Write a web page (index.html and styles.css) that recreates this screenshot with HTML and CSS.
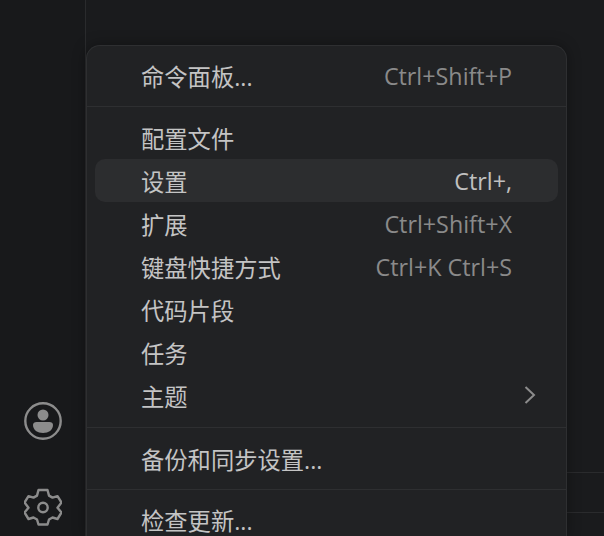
FILE: index.html
```html
<!DOCTYPE html>
<html lang="zh-CN">
<head>
  <meta charset="UTF-8">
  <title>Manage menu</title>
  <link rel="stylesheet" href="styles.css">
</head>
<body>
  <div class="workbench">
    <div class="activity-bar">
      <svg class="activity-icon" viewBox="0 0 38 38" width="38" height="38">
        <circle cx="19" cy="19" r="17.700" fill="none" stroke="#8c8c8c" stroke-width="2.400"/>
        <circle cx="19" cy="13" r="5.500" fill="#8c8c8c"/>
        <path d="M9 23c0-2 1.500-3 3.500-3h13c2 0 3.500 1 3.500 3 0 5-4.500 8-10 8s-10-3-10-8z" fill="#8c8c8c"/>
      </svg>
      <svg class="activity-icon" viewBox="0 0 38 38" width="38" height="38" fill="none" stroke="#8c8c8c" stroke-width="2.400" stroke-linejoin="round">
        <path d="M14.500 2h9l1.500 5.600 3.500 2 5-1.500 4 6.400-4 5.300 4 4.700-4 6.500-5-1.500-3.500 2-1.500 5h-9l-1.500-5-3.500-2-5 1.500-4-6.500 4-4.700-4-5.300 4-6.400 5 1.500 3.500-2z"/>
        <circle cx="19" cy="19.500" r="4.700"/>
      </svg>
    </div>
    <div class="editor-area">
      <div class="panel-line first"></div>
      <div class="panel-line"></div>
    </div>
  </div>

  <div class="menu">
    <div class="menu-item"><span>命令面板...</span><span class="keys">Ctrl+Shift+P</span></div>
    <div class="separator"></div>
    <div class="menu-item"><span>配置文件</span></div>
    <div class="menu-item active"><span>设置</span><span class="keys">Ctrl+,</span></div>
    <div class="menu-item"><span>扩展</span><span class="keys">Ctrl+Shift+X</span></div>
    <div class="menu-item"><span>键盘快捷方式</span><span class="keys">Ctrl+K Ctrl+S</span></div>
    <div class="menu-item"><span>代码片段</span></div>
    <div class="menu-item"><span>任务</span></div>
    <div class="menu-item">
      <span>主题</span>
      <svg class="chevron" viewBox="0 0 12 20" width="12" height="20" fill="none" stroke="#8c8c8c" stroke-width="2">
        <path d="M1.500 2l8.500 8-8.500 8"/>
      </svg>
    </div>
    <div class="separator wide"></div>
    <div class="menu-item"><span>备份和同步设置...</span></div>
    <div class="separator"></div>
    <div class="menu-item last"><span>检查更新...</span></div>
  </div>
</body>
</html>
```

FILE: styles.css
```css
html, body {
  margin: 0;
  height: 100%;
  overflow: hidden;
  background: #1a1b1d;
}
.workbench {
  display: flex;
  height: 536px;
}
.activity-bar {
  width: 86px;
  box-sizing: border-box;
  border-right: 1px solid #2a2b2d;
  background: #18191b;
  display: flex;
  flex-direction: column;
  align-items: center;
  padding-top: 402px;
  gap: 48px;
}
.activity-icon {
  flex: none;
}
.editor-area {
  flex: 1;
  padding-top: 472px;
}
.panel-line {
  height: 1px;
  background: #2a2b2d;
}
.panel-line.first {
  margin-bottom: 39px;
}
.menu {
  position: absolute;
  left: 86px;
  top: 45px;
  width: 481px;
  height: 491px;
  box-sizing: border-box;
  padding: 8px;
  overflow: hidden;
  background: #212224;
  border: 1px solid #2e2f31;
  border-bottom: none;
  border-radius: 14px 14px 0 0;
  box-shadow: 0 0 14px rgba(0,0,0,0.35);
  font-family: "Open Sans", "Noto Sans CJK SC", sans-serif;
  font-size: 23.3px;
  line-height: 24px;
  color: #c4c4c4;
}
.menu-item {
  height: 43px;
  box-sizing: border-box;
  display: flex;
  align-items: center;
  justify-content: space-between;
  padding: 3px 46px 0 46px;
  border-radius: 10px;
  white-space: nowrap;
  flex: none;
}
.menu-item.active {
  background: #2c2d2f;
}
.menu-item.last {
  height: 37px;
  align-items: flex-start;
  line-height: 20px;
  padding-top: 12px;
}
.keys {
  margin-top: -2px;
  color: #8a8a8a;
}
.active .keys {
  color: #c0c0c0;
}
.chevron {
  margin-right: -24px;
  margin-top: -4px;
}
.separator {
  height: 1px;
  background: #2e2f31;
  margin: 9px -8px;
}
.separator.wide {
  margin: 10px -8px 9px;
}
```
